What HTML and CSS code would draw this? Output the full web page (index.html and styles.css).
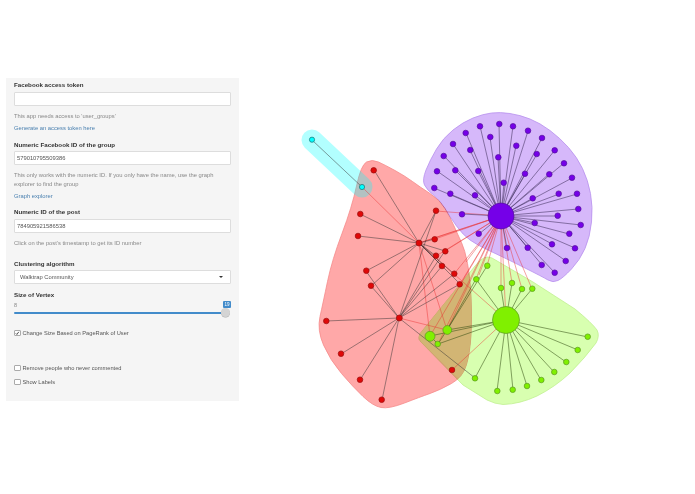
FILE: index.html
```html
<!DOCTYPE html>
<html lang="en">
<head>
<meta charset="utf-8">
<title>Facebook group graph</title>
<link rel="stylesheet" href="styles.css">
</head>
<body>
<div class="page">
  <form class="well">
    <div class="group token-group">
      <label class="label">Facebook access token</label>
      <div class="input"></div>
      <p class="help first">This app needs access to 'user_groups'</p>
      <a class="link">Generate an access token here</a>
    </div>
    <div class="group">
      <label class="label">Numeric Facebook ID of the group</label>
      <div class="input">579010795509386</div>
      <p class="help first">This only works with the numeric ID. If you only have the name, use the graph explorer to find the group</p>
      <a class="link">Graph explorer</a>
    </div>
    <div class="group">
      <label class="label">Numeric ID of the post</label>
      <div class="input">784905921586538</div>
      <p class="help first">Click on the post's timestamp to get its ID number</p>
    </div>
    <div class="group select-group">
      <label class="label">Clustering algorithm</label>
      <div class="input select"><span>Walktrap Community</span><i class="caret"></i></div>
    </div>
    <div class="group slider-group">
      <label class="label">Size of Vertex</label>
      <div class="scale"><span>8</span><span class="badge">19</span></div>
      <div class="track"><div class="handle"></div></div>
    </div>
    <div class="check check-size">
      <span class="box"><svg viewBox="0 0 7 7" class="tick"><path d="M1.2 3.6L2.9 5.4L5.9 1.3"/></svg></span>
      <span>Change Size Based on PageRank of User</span>
    </div>
    <div class="check check-remove"><span class="box"></span><span>Remove people who never commented</span></div>
    <div class="check check-labels"><span class="box"></span><span>Show Labels</span></div>
  </form>

  <svg class="graph" viewBox="239 0 456 494" xmlns="http://www.w3.org/2000/svg" role="img" aria-label="Community graph">
    <g class="hulls">
      <path class="hull h-green" d="M419 337Q419 334 423 330L475 266Q484 254 492 258L533 282L575 309Q592 323 597 330Q600 336 596 343Q585 358 570 373Q555 387 537 396Q520 404 503 404.5Q495 404 487 400L463 385L421 342Q418 339 419 337Z"/>
      <path class="hull h-purple" d="M424.5 185Q422 180 426 170Q430 160 436.5 149Q443 138 453 130Q463 122 473 118Q483 114 491.5 113Q500 112 510 113.5Q520 115 530 119Q540 123 550 130.5Q560 138 568.5 147.5Q577 157 582.5 168.5Q588 180 590.5 193.5Q593 207 591.5 222Q590 237 585 248.5Q580 260 571.5 269Q563 278 558 280.5Q553 283 548 280Q543 277 523 267Q503 257 490 251Q477 245 470 240Q463 235 456.5 226Q450 217 445 208.5Q440 200 433.5 195Q427 190 424.5 185Z"/>
      <path class="hull h-red" d="M366.5 162Q372 159 378.5 162Q385 165 395 170.5Q405 176 412.5 181.5Q420 187 430 193.5Q440 200 445 208.5Q450 217 454 226Q458 235 461.5 242.5Q465 250 467.5 263.5Q470 277 471 297Q472 317 471 334.5Q470 352 466.5 364.5Q463 377 451.5 383.5Q440 390 430 393.5Q420 397 404.5 403Q389 409 381 407.5Q373 406 363 396.5Q353 387 341.5 373.5Q330 360 323.5 345Q317 330 320 316.5Q323 303 327.5 281.5Q332 260 342 233.5Q352 207 356.5 186Q361 165 366.5 162Z"/>
      <path class="hull-overlap" d="M419 337Q419 334 423 330L468 274Q470 280 471 297Q472 317 471 334.5Q470 352 466.5 364.5Q464 374 458 378L421 342Z"/>
      <path class="hull-cyan" d="M312 140L362 187"/>
    </g>
    <path class="edge e-cross" d="M501 216L436 211M501 216L435 239M501 216L445 251M501 216L436 256M501 216L454 274M501 216L460 284M501 216L419 243M501 216L419 243M501 216L430 336M501 216L447 330M501 216L438 344M501 216L476 279M501 216L487 266M501 216L501 288M501 216L512 283M501 216L522 289M501 216L532 289M501 216L506 320M501 216L479 275M501 216L466 262M419 243L430 336M419 243L447 330M419 243L506 320M452 370L506 320M362 187L419 243M399 318L447 330"/>
    <path class="edge e-purple" d="M501 216L499 124M501 216L480 126M501 216L513 126M501 216L466 133M501 216L528 131M501 216L542 138M501 216L490 137M501 216L453 144M501 216L516 146M501 216L470 150M501 216L555 150M501 216L444 156M501 216L537 154M501 216L498 157M501 216L564 163M501 216L437 171M501 216L455 170M501 216L478 171M501 216L525 174M501 216L549 174M501 216L572 178M501 216L504 183M501 216L434 188M501 216L450 194M501 216L475 195M501 216L533 198M501 216L559 194M501 216L577 194M501 216L578 209M501 216L558 216M501 216L462 214M501 216L535 223M501 216L581 225M501 216L569 234M501 216L479 234M501 216L552 244M501 216L575 248M501 216L507 248M501 216L528 248M501 216L566 261M501 216L542 265M501 216L555 273"/>
    <path class="edge e-dark" d="M312 140L362 187M419 243L374 170M419 243L360 214M419 243L358 236M419 243L436 211M419 243L435 239M419 243L436 256M419 243L445 251M419 243L442 266M419 243L454 274M419 243L460 284M419 243L366 271M419 243L371 286M399 318L436 256M399 318L445 251M399 318L442 266M399 318L454 274M399 318L460 284M399 318L371 286M399 318L366 271M399 318L326 321M399 318L341 354M399 318L360 380M399 318L382 400M399 318L475 378M399 318L436 211"/>
    <path class="edge e-green" d="M506 320L476 279M506 320L501 288M506 320L512 283M506 320L522 289M506 320L532 289M506 320L430 336M506 320L447 330M506 320L438 344M506 320L588 337M506 320L578 350M506 320L566 362M506 320L554 372M506 320L541 380M506 320L527 386M506 320L513 390M506 320L497 391M506 320L475 378M447 330L487 266M447 330L476 279M447 330L438 344M430 336L438 344"/>
    <g class="nodes purple">
      <circle cx="501" cy="216" r="13"/>
      <circle cx="499.3" cy="124" r="2.8"/><circle cx="480" cy="126.3" r="2.8"/><circle cx="513" cy="126.3" r="2.8"/><circle cx="465.7" cy="133" r="2.8"/><circle cx="528" cy="130.7" r="2.8"/><circle cx="542" cy="138" r="2.8"/><circle cx="490.3" cy="137" r="2.8"/><circle cx="453" cy="144" r="2.8"/><circle cx="516.3" cy="145.7" r="2.8"/><circle cx="470.3" cy="150" r="2.8"/><circle cx="554.7" cy="150.3" r="2.8"/><circle cx="443.7" cy="156" r="2.8"/><circle cx="536.7" cy="154" r="2.8"/><circle cx="498.3" cy="157.3" r="2.8"/><circle cx="564" cy="163.3" r="2.8"/><circle cx="437" cy="171.3" r="2.8"/><circle cx="455.3" cy="170.3" r="2.8"/><circle cx="478.3" cy="171" r="2.8"/><circle cx="525" cy="173.7" r="2.8"/><circle cx="549.3" cy="174.3" r="2.8"/><circle cx="572" cy="177.7" r="2.8"/><circle cx="503.7" cy="182.7" r="2.8"/><circle cx="434.3" cy="188" r="2.8"/><circle cx="450.3" cy="193.7" r="2.8"/><circle cx="475" cy="195.3" r="2.8"/><circle cx="532.7" cy="198.3" r="2.8"/><circle cx="558.7" cy="193.7" r="2.8"/><circle cx="577" cy="193.7" r="2.8"/><circle cx="578.3" cy="209" r="2.8"/><circle cx="557.7" cy="215.7" r="2.8"/><circle cx="462" cy="214.3" r="2.8"/><circle cx="534.7" cy="223" r="2.8"/><circle cx="580.7" cy="225" r="2.8"/><circle cx="569.3" cy="233.7" r="2.8"/><circle cx="478.7" cy="233.7" r="2.8"/><circle cx="552" cy="244.3" r="2.8"/><circle cx="575" cy="248.3" r="2.8"/><circle cx="507" cy="248" r="2.8"/><circle cx="527.7" cy="247.7" r="2.8"/><circle cx="565.7" cy="261" r="2.8"/><circle cx="541.7" cy="265" r="2.8"/><circle cx="554.7" cy="272.7" r="2.8"/>
    </g>
    <g class="nodes red">
      <circle cx="419" cy="243" r="3"/><circle cx="399.3" cy="318" r="3"/>
      <circle cx="373.7" cy="170.3" r="2.8"/><circle cx="360.3" cy="214" r="2.8"/><circle cx="358" cy="236" r="2.8"/><circle cx="436" cy="210.7" r="2.8"/><circle cx="434.7" cy="239.3" r="2.8"/><circle cx="436" cy="255.7" r="2.8"/><circle cx="445.3" cy="251.3" r="2.8"/><circle cx="442" cy="266" r="2.8"/><circle cx="454.3" cy="273.7" r="2.8"/><circle cx="459.7" cy="284.3" r="2.8"/><circle cx="366.3" cy="270.7" r="2.8"/><circle cx="371" cy="285.7" r="2.8"/><circle cx="326.3" cy="321" r="2.8"/><circle cx="341" cy="353.7" r="2.8"/><circle cx="360" cy="379.7" r="2.8"/><circle cx="381.7" cy="399.7" r="2.8"/><circle cx="452" cy="370" r="2.8"/>
    </g>
    <g class="nodes green">
      <circle cx="506" cy="320" r="13.5"/><circle cx="447.3" cy="330" r="4.4"/><circle cx="430" cy="336.3" r="5"/>
      <circle cx="487.3" cy="265.7" r="2.8"/><circle cx="476.3" cy="279.3" r="2.8"/><circle cx="501" cy="288" r="2.8"/><circle cx="512" cy="283" r="2.8"/><circle cx="522" cy="289" r="2.8"/><circle cx="532.3" cy="288.7" r="2.8"/><circle cx="437.7" cy="344" r="2.8"/><circle cx="587.7" cy="336.7" r="2.8"/><circle cx="577.7" cy="350" r="2.8"/><circle cx="566.3" cy="362" r="2.8"/><circle cx="554.3" cy="372" r="2.8"/><circle cx="541.3" cy="380" r="2.8"/><circle cx="527" cy="386" r="2.8"/><circle cx="512.7" cy="389.7" r="2.8"/><circle cx="497.3" cy="391" r="2.8"/><circle cx="475" cy="378.3" r="2.8"/>
    </g>
    <g class="nodes cyan">
      <circle cx="312" cy="139.7" r="2.6"/><circle cx="362" cy="187" r="2.6"/>
    </g>
  </svg>
</div>
</body>
</html>
```
FILE: styles.css
```css
html, body {
  margin: 0;
  padding: 0;
  background: #fff;
}

.page {
  display: flex;
  align-items: flex-start;
  width: 695px;
  height: 494px;
  overflow: hidden;
}

.well {
  box-sizing: border-box;
  flex: 0 0 233px;
  width: 233px;
  height: 323px;
  margin: 78px 0 0 6px;
  padding: 3px 8px 0;
  background: #f5f5f5;
  font-family: "Liberation Sans", Arial, sans-serif;
  font-size: 5.8px;
  color: #666;
  filter: blur(0.3px);
}

.group {
  display: flex;
  flex-direction: column;
  margin-bottom: 7px;
}

.token-group {
  margin-bottom: 8px;
}

.label {
  font-family: "Liberation Sans", Arial, sans-serif;
  font-weight: 700;
  font-size: 6.2px;
  line-height: 8px;
  color: #333;
  margin-bottom: 2.5px;
}

.input {
  box-sizing: border-box;
  height: 14px;
  padding: 0 2px;
  background: #fff;
  border: 0.5px solid #ddd;
  border-radius: 1px;
  font-size: 5.8px;
  line-height: 13px;
  color: #555;
}

.help {
  margin: 0;
  color: #888;
  line-height: 9px;
}

.help.first {
  margin-top: 6px;
}

.link {
  margin-top: 3px;
  line-height: 9px;
  color: #4a80b0;
}

.select-group {
  margin-top: 12px;
  margin-bottom: 7px;
}

.select {
  display: flex;
  align-items: center;
  justify-content: space-between;
  padding: 0 7px 0 5px;
}

.caret {
  width: 0;
  height: 0;
  border-left: 2.2px solid transparent;
  border-right: 2.2px solid transparent;
  border-top: 2.5px solid #333;
}

.slider-group {
  margin-bottom: 0;
}

.label + .scale {
  margin-top: -1px;
}

.scale {
  display: flex;
  justify-content: space-between;
  align-items: center;
  height: 8px;
  font-size: 5.5px;
  color: #888;
}

.badge {
  box-sizing: border-box;
  width: 8px;
  height: 7px;
  background: #428bca;
  border-radius: 1px;
  color: #fff;
  font-size: 4.5px;
  line-height: 7px;
  text-align: center;
}

.track {
  position: relative;
  height: 2.6px;
  width: 212px;
  margin-top: 3px;
  background: #428bca;
  border-radius: 1px;
}

.handle {
  position: absolute;
  right: -4px;
  top: -3.2px;
  width: 9px;
  height: 9px;
  border-radius: 50%;
  background: #d4d4d4;
  box-shadow: 0 0.5px 0.5px #aaa;
}

.check {
  display: flex;
  align-items: center;
  gap: 2px;
  height: 8px;
  font-size: 5.7px;
  color: #555;
}

.check-size {
  margin-top: 15px;
}

.check-remove {
  margin-top: 27px;
}

.check-labels {
  margin-top: 6px;
}

.box {
  box-sizing: border-box;
  flex: 0 0 6.5px;
  width: 6.5px;
  height: 6.5px;
  background: #fff;
  border: 0.5px solid #aaa;
  border-radius: 1px;
}

.tick {
  display: block;
  width: 100%;
  height: 100%;
  overflow: visible;
}

.tick path {
  fill: none;
  stroke: #222;
  stroke-width: 1.2;
}

.graph {
  flex: 0 0 456px;
  width: 456px;
  height: 494px;
  filter: blur(0.25px);
}

.hull {
  stroke-width: 0.8;
  mix-blend-mode: multiply;
}

.h-red {
  fill: #ffa8a8;
  stroke: #f58a8a;
}

.h-purple {
  fill: #d6b8fa;
  stroke: #b890ee;
}

.h-green {
  fill: #d8ffb0;
  stroke: #c0f090;
}

.hull-overlap {
  fill: #d2b574;
}

.hull-cyan {
  fill: none;
  stroke: #00ffff;
  stroke-opacity: 0.3;
  stroke-width: 21;
  stroke-linecap: round;
}

.edge {
  fill: none;
  stroke-width: 0.75;
}

.e-cross {
  stroke: #e83030;
  stroke-opacity: 0.6;
}

.e-purple {
  stroke: #3a2a55;
  stroke-opacity: 0.7;
}

.e-dark {
  stroke: #333;
  stroke-opacity: 0.65;
}

.e-green {
  stroke: #2f4a10;
  stroke-opacity: 0.7;
}

.nodes circle {
  stroke-width: 0.7;
}

.purple circle {
  fill: #7500e8;
  stroke: #55109c;
}

.red circle {
  fill: #e00808;
  stroke: #981010;
}

.green circle {
  fill: #80f000;
  stroke: #5a9a20;
}

.cyan circle {
  fill: #00ffff;
  stroke: #207070;
}
```
